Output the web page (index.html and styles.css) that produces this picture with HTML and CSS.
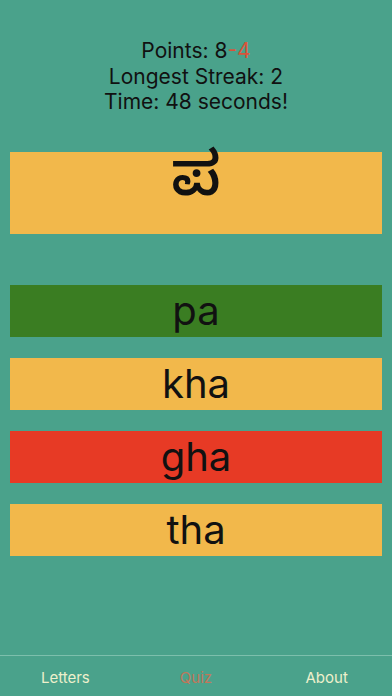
FILE: index.html
```html
<!DOCTYPE html>
<html>
<head>
<meta charset="utf-8">
<link rel="stylesheet" href="styles.css">
</head>
<body>
<div class="screen">
  <div class="stats">
    <div class="line">Points: 8<span class="neg">-4</span></div>
    <div class="line">Longest Streak: 2</div>
    <div class="line">Time: 48 seconds!</div>
  </div>
  <div class="card question"><span class="kn">ಪ</span></div>
  <div class="answers">
    <div class="card answer correct">pa</div>
    <div class="card answer">kha</div>
    <div class="card answer wrong">gha</div>
    <div class="card answer">tha</div>
  </div>
  <div class="tabbar">
    <div class="tab">Letters</div>
    <div class="tab active">Quiz</div>
    <div class="tab">About</div>
  </div>
</div>
</body>
</html>
```
FILE: styles.css
```css
html, body {
  margin: 0;
  padding: 0;
}
body {
  background: #4aa28b;
  font-family: Inter, "Liberation Sans", sans-serif;
  color: #111;
}
.screen {
  height: 696px;
  display: flex;
  flex-direction: column;
}
.stats {
  padding-top: 38px;
  text-align: center;
  font-size: 21px;
  line-height: 25.5px;
}
.neg {
  color: #d9533a;
}
.card {
  margin: 0 10px;
  background: #f2b84b;
  display: flex;
  align-items: center;
  justify-content: center;
}
.question {
  margin-top: 37px;
  height: 82px;
}
.kn {
  font-family: "Noto Sans Kannada", "Noto Serif Kannada", "Lohit Kannada", "Tunga", sans-serif;
  font-size: 61px;
  font-weight: 500;
  line-height: 1;
  margin-top: -10px;
}
.answers {
  margin-top: 51px;
  display: flex;
  flex-direction: column;
  gap: 21.3px;
}
.answer {
  height: 52px;
  font-size: 40px;
  line-height: 1;
}
.correct {
  background: #3a7d22;
}
.wrong {
  background: #e73a25;
}
.tabbar {
  margin-top: auto;
  height: 40px;
  border-top: 1px solid #7dbfac;
  display: grid;
  grid-template-columns: 1fr 1fr 1fr;
  align-items: center;
  text-align: center;
  font-size: 15px;
  color: #eef0cc;
}
.tab {
  padding-top: 2px;
}
.active {
  color: #c0775a;
}
```
